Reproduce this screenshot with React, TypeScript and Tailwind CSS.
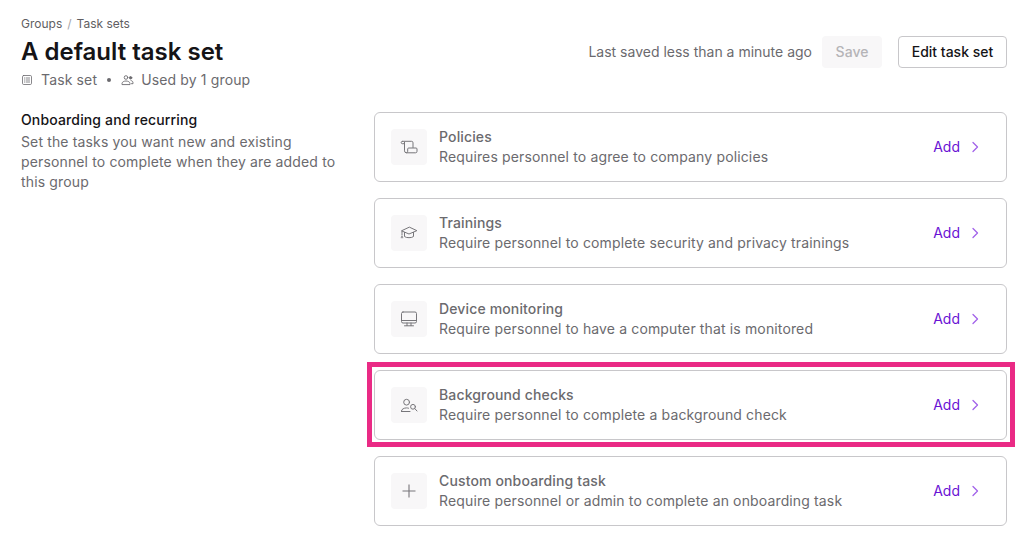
import React from "react";

const stroke = { fill: "none", stroke: "currentColor", strokeWidth: 1, strokeLinecap: "round", strokeLinejoin: "round" } as const;

const PolicyIcon = () => (
  <svg width="18" height="18" viewBox="0 0 18 18" {...stroke}>
    <path d="M2.5 3.3h9a1.5 1.5 0 0 1 1.5 1.5v4.7" />
    <path d="M2.5 3.3a1.2 1.2 0 0 0-.2 2.4h2.2" />
    <path d="M4.5 4.2v8.6a2 2 0 0 0 2 2h9a1.5 1.5 0 0 0 1.5-1.5v-2.3a1 1 0 0 0-1-1H8.7a1 1 0 0 0-1 1v2.3a1.5 1.5 0 0 1-1.2 1.5" />
  </svg>
);
const CapIcon = () => (
  <svg width="18" height="18" viewBox="0 0 18 18" {...stroke}>
    <path d="M9 3.3 1.5 6.8 9 10l7.5-3.2Z" />
    <path d="M4.5 8.4v4.1c1.5 1.6 7.5 1.6 9 0V8.4" />
    <path d="M2 7.5v3.6" strokeDasharray="1.4 0.8" />
    <path d="M1.3 13.8c0-.9.3-1.6.7-1.6s.7.7.7 1.6" />
  </svg>
);
const MonitorIcon = () => (
  <svg width="18" height="18" viewBox="0 0 18 18" {...stroke}>
    <rect x="1.5" y="2" width="15" height="11" rx="1.5" />
    <path d="M1.5 10.5h15M7 13v2.6M11 13v2.6M4.5 15.8h9" />
  </svg>
);
const PersonSearchIcon = () => (
  <svg width="18" height="18" viewBox="0 0 18 18" {...stroke}>
    <circle cx="6.6" cy="6.2" r="2.9" />
    <path d="M1.5 15.5V15c0-1.7 2.5-3.1 5-3.1.7 0 1.3.1 2 .3" />
    <path d="M1.5 15.5h8.5" />
    <circle cx="13" cy="10.8" r="2.4" />
    <path d="m14.8 12.6 2.2 2.4" />
  </svg>
);
const PlusIcon = () => (
  <svg width="18" height="18" viewBox="0 0 18 18" fill="none" stroke="currentColor" strokeWidth="1.1">
    <path d="M9 2.5v13M2.5 9h13" />
  </svg>
);
const TableIcon = () => (
  <svg width="12" height="12" viewBox="0 0 12 12" fill="none" stroke="currentColor" strokeWidth="0.8" strokeLinecap="round">
    <rect x="1.5" y="1.5" width="9" height="9" rx="1.2" />
    <path d="M3.4 4h.4M5.2 4h3.4M3.4 6h.4M5.2 6h3.4M3.4 8h.4M5.2 8h3.4" />
  </svg>
);
const UsersIcon = () => (
  <svg width="13" height="12" viewBox="0 0 13 12" {...stroke} strokeWidth="0.9">
    <circle cx="5" cy="3.5" r="1.8" />
    <path d="M1 10.2V9.5C1 8 3 7 5 7s4 1 4 2.5v.7Z" />
    <circle cx="9.6" cy="3.8" r="1.2" fill="currentColor" />
    <path d="M10 6.5c1 .2 2 1 2 2.2v1h-1.5" />
  </svg>
);
const Chevron = () => (
  <svg width="16" height="16" viewBox="0 0 16 16" fill="none" stroke="#a263ea" strokeWidth="1.3" strokeLinecap="round" strokeLinejoin="round">
    <path d="m6 3.5 4.5 4.5L6 12.5" />
  </svg>
);

const rows = [
  { title: "Policies", desc: "Requires personnel to agree to company policies", icon: <PolicyIcon /> },
  { title: "Trainings", desc: "Require personnel to complete security and privacy trainings", icon: <CapIcon /> },
  { title: "Device monitoring", desc: "Require personnel to have a computer that is monitored", icon: <MonitorIcon /> },
  { title: "Background checks", desc: "Require personnel to complete a background check", icon: <PersonSearchIcon />, highlight: true },
  { title: "Custom onboarding task", desc: "Require personnel or admin to complete an onboarding task", icon: <PlusIcon /> },
];

export default function App() {
  return (
    <div className="h-[547px] w-[1026px] overflow-hidden bg-white pl-[21px] pr-[19px] pt-[16px] text-[14px] leading-[20px] text-[#6b6a6e] [font-family:Inter,sans-serif]">
      <div className="flex items-start justify-between">
        <div>
          <div className="flex h-[16px] items-center text-[12px] leading-[16px] text-[#5f5e62]">
            <span>Groups</span>
            <span className="mx-[5px] text-[#a5a4a8]">/</span>
            <span>Task sets</span>
          </div>
          <h1 className="mt-[4px] text-[24px] font-semibold leading-[32px] text-[#151417]">A default task set</h1>
          <div className="mt-[2px] flex h-[20px] items-center tracking-[0.14px]">
            <TableIcon />
            <span className="ml-[8px]">Task set</span>
            <span className="ml-[10px] mr-[10px] h-[4px] w-[4px] rounded-full bg-[#6b6a6e]" />
            <UsersIcon />
            <span className="ml-[7px]">Used by 1 group</span>
          </div>
        </div>
        <div className="mt-[20px] flex items-center">
          <span>Last saved less than a minute ago</span>
          <button className="ml-[10px] h-[32px] w-[60px] rounded-[4px] bg-[#f8f7f8] font-medium text-[#b5b4b7]">Save</button>
          <button className="ml-[16px] h-[32px] w-[109px] rounded-[4px] border border-[#c8c7ca] bg-white font-medium text-[#151417]">Edit task set</button>
        </div>
      </div>

      <div className="mt-[20px] flex">
        <div className="w-[353px] shrink-0 tracking-[0.14px]">
          <h2 className="mb-[2px] font-medium text-[#151417]">Onboarding and recurring</h2>
          <p className="w-[320px]">Set the tasks you want new and existing personnel to complete when they are added to this group</p>
        </div>
        <div className="mt-[2px] flex min-w-0 flex-1 flex-col gap-[16px]">
          {rows.map((r) => (
            <div key={r.title} className="relative">
              <div className="flex h-[70px] items-center rounded-[6px] border border-[#c8c7ca] bg-white pl-[16px] pr-[23px]">
                <div className="flex h-[36px] w-[36px] shrink-0 items-center justify-center rounded-[4px] bg-[#f8f7f8] text-[#77767a]">
                  {r.icon}
                </div>
                <div className="ml-[12px] min-w-0 flex-1 tracking-[0.14px]">
                  <div className="font-medium">{r.title}</div>
                  <div>{r.desc}</div>
                </div>
                <span className="text-[#6a12d4]">Add</span>
                <span className="ml-[7px]"><Chevron /></span>
              </div>
              {r.highlight && (
                <div className="pointer-events-none absolute -left-[7px] -right-[8px] -top-[8px] -bottom-[7px] border-[5px] border-[#ea2a85]" />
              )}
            </div>
          ))}
        </div>
      </div>
    </div>
  );
}
